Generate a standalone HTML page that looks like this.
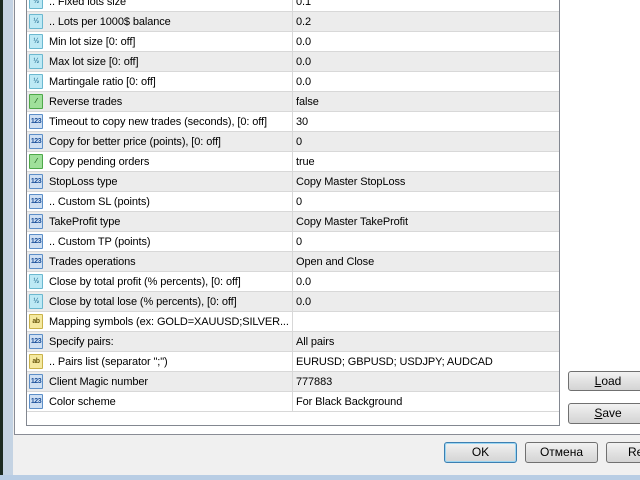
<!DOCTYPE html>
<html><head><style>
body{margin:0;width:640px;height:480px;overflow:hidden;background:#f0f0f0;font-family:"Liberation Sans",sans-serif;font-size:11px;position:relative}
.abs{position:absolute}
.row{position:absolute;left:27px;width:532px;height:19px;border-bottom:1px solid #d8d8d8;background:#fff}
.row.g{background:#ececec}
.row span{position:absolute;top:4px;white-space:nowrap;color:#000;letter-spacing:-0.1px;overflow:hidden}
.n{left:22px;width:243px}.v{left:269px}
.row .div{position:absolute;left:265px;top:0;width:1px;height:20px;background:#d8d8d8}
.ic{position:absolute;left:2px;top:2px;width:14px;height:15px;border-radius:1px;font-size:7px;font-weight:bold;font-style:normal;text-align:center;line-height:14px;box-sizing:border-box;letter-spacing:-0.5px}
.h{background:#bde9f5;border:1px solid #6bb8d0;color:#3a7fa0}
.b{background:#cfe0f3;border:1px solid #5d8fc8;color:#1b4f9a}
.t{background:#9fe09a;border:1px solid #4ea84a;color:#1d5a1a}
.a{background:#f5e9a0;border:1px solid #c9b24a;color:#6b5a10}
.btn{position:absolute;border:1px solid #707070;border-radius:3px;background:linear-gradient(#f2f2f2,#e2e2e2 50%,#d4d4d4);text-align:center;font-size:12px;line-height:19px;box-sizing:border-box}
</style></head><body>
<div class="abs" style="left:0;top:0;width:3px;height:480px;background:#1a2a22"></div>
<div class="abs" style="left:3px;top:0;width:10px;height:476px;background:#c4d3e3"></div>
<div class="abs" style="left:0;top:475px;width:640px;height:5px;background:#b8cde4"></div>
<div class="abs" style="left:13px;top:0;width:627px;height:475px;background:#f0f0f0"></div>
<div class="abs" style="left:14px;top:-1px;width:640px;height:436px;background:#fff;border:1px solid #898c95;box-sizing:border-box"></div>
<div class="abs" style="left:26px;top:-1px;width:534px;height:427px;border:1px solid #828790;box-sizing:border-box;background:#fff"></div>

<div class="row" style="top:-8px"><i class="ic h">½</i><span class="n">.. Fixed lots size</span><i class="div"></i><span class="v">0.1</span></div>
<div class="row g" style="top:12px"><i class="ic h">½</i><span class="n">.. Lots per 1000$ balance</span><i class="div"></i><span class="v">0.2</span></div>
<div class="row" style="top:32px"><i class="ic h">½</i><span class="n">Min lot size [0: off]</span><i class="div"></i><span class="v">0.0</span></div>
<div class="row g" style="top:52px"><i class="ic h">½</i><span class="n">Max lot size [0: off]</span><i class="div"></i><span class="v">0.0</span></div>
<div class="row" style="top:72px"><i class="ic h">½</i><span class="n">Martingale ratio [0: off]</span><i class="div"></i><span class="v">0.0</span></div>
<div class="row g" style="top:92px"><i class="ic t">⁄</i><span class="n">Reverse trades</span><i class="div"></i><span class="v">false</span></div>
<div class="row" style="top:112px"><i class="ic b">123</i><span class="n">Timeout to copy new trades (seconds), [0: off]</span><i class="div"></i><span class="v">30</span></div>
<div class="row g" style="top:132px"><i class="ic b">123</i><span class="n">Copy for better price (points), [0: off]</span><i class="div"></i><span class="v">0</span></div>
<div class="row" style="top:152px"><i class="ic t">⁄</i><span class="n">Copy pending orders</span><i class="div"></i><span class="v">true</span></div>
<div class="row g" style="top:172px"><i class="ic b">123</i><span class="n">StopLoss type</span><i class="div"></i><span class="v">Copy Master StopLoss</span></div>
<div class="row" style="top:192px"><i class="ic b">123</i><span class="n">.. Custom SL (points)</span><i class="div"></i><span class="v">0</span></div>
<div class="row g" style="top:212px"><i class="ic b">123</i><span class="n">TakeProfit type</span><i class="div"></i><span class="v">Copy Master TakeProfit</span></div>
<div class="row" style="top:232px"><i class="ic b">123</i><span class="n">.. Custom TP (points)</span><i class="div"></i><span class="v">0</span></div>
<div class="row g" style="top:252px"><i class="ic b">123</i><span class="n">Trades operations</span><i class="div"></i><span class="v">Open and Close</span></div>
<div class="row" style="top:272px"><i class="ic h">½</i><span class="n">Close by total profit (% percents), [0: off]</span><i class="div"></i><span class="v">0.0</span></div>
<div class="row g" style="top:292px"><i class="ic h">½</i><span class="n">Close by total lose (% percents), [0: off]</span><i class="div"></i><span class="v">0.0</span></div>
<div class="row" style="top:312px"><i class="ic a">ab</i><span class="n">Mapping symbols (ex: GOLD=XAUUSD;SILVER...</span><i class="div"></i><span class="v"></span></div>
<div class="row g" style="top:332px"><i class="ic b">123</i><span class="n">Specify pairs:</span><i class="div"></i><span class="v">All pairs</span></div>
<div class="row" style="top:352px"><i class="ic a">ab</i><span class="n">.. Pairs list (separator ";")</span><i class="div"></i><span class="v">EURUSD; GBPUSD; USDJPY; AUDCAD</span></div>
<div class="row g" style="top:372px"><i class="ic b">123</i><span class="n">Client Magic number</span><i class="div"></i><span class="v">777883</span></div>
<div class="row" style="top:392px"><i class="ic b">123</i><span class="n">Color scheme</span><i class="div"></i><span class="v">For Black Background</span></div>

<div class="btn" style="left:568px;top:371px;width:80px;height:20px"><u>L</u>oad</div>
<div class="btn" style="left:568px;top:403px;width:80px;height:21px"><u>S</u>ave</div>
<div class="btn" style="left:444px;top:442px;width:73px;height:21px;border-color:#3c7fb1;box-shadow:inset 0 0 0 1px #9cd6f2">OK</div>
<div class="btn" style="left:525px;top:442px;width:73px;height:21px">Отмена</div>
<div class="btn" style="left:606px;top:442px;width:73px;height:21px;text-align:left;padding-left:21px">Reset</div>
</body></html>
